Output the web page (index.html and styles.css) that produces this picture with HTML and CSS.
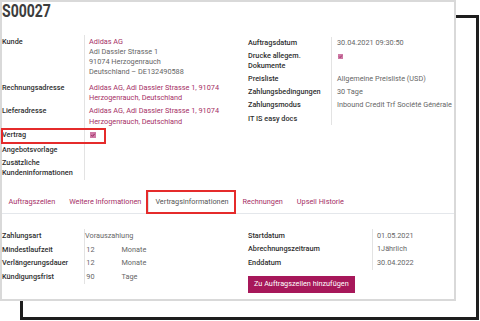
FILE: index.html
```html
<!DOCTYPE html>
<html lang="de">

<head>
    <meta charset="UTF-8">
    <meta name="viewport" content="width=device-width, initial-scale=1.0">
    <title>S00027</title>
    <link rel="stylesheet" href="styles.css">
</head>

<body>
    <div class="frame"></div>

    <div class="sheet">
        <h1 class="title"><span>S00027</span></h1>

        <div class="groups">
            <div class="group group-left">
                <div class="field field-kunde">
                    <div class="label">Kunde</div>
                    <div class="value">
                        <a class="link">Adidas AG</a><br>
                        Adi Dassler Strasse 1<br>
                        91074 Herzogenrauch<br>
                        Deutschland – DE132490588
                    </div>
                </div>
                <div class="field">
                    <div class="label">Rechnungsadresse</div>
                    <div class="value"><a class="link">Adidas AG, Adi Dassler Strasse 1, 91074 Herzogenrauch, Deutschland</a></div>
                </div>
                <div class="field">
                    <div class="label">Lieferadresse</div>
                    <div class="value"><a class="link">Adidas AG, Adi Dassler Strasse 1, 91074 Herzogenrauch, Deutschland</a></div>
                </div>
                <div class="field field-vertrag">
                    <div class="label">Vertrag</div>
                    <div class="value">
                        <svg class="check" width="6" height="6" viewBox="0 0 6 6"><rect width="6" height="6" fill="#cf7aa6"/><path d="M1.3 3.1 L2.5 4.3 L4.7 1.8" stroke="#8c1d52" stroke-width="0.9" fill="none"/></svg>
                    </div>
                </div>
                <div class="field field-tight">
                    <div class="label">Angebotsvorlage</div>
                    <div class="value"></div>
                </div>
                <div class="field field-last">
                    <div class="label">Zusätzliche Kundeninformationen</div>
                    <div class="value"></div>
                </div>
            </div>

            <div class="group group-right">
                <div class="field">
                    <div class="label">Auftragsdatum</div>
                    <div class="value">30.04.2021 09:30:50</div>
                </div>
                <div class="field">
                    <div class="label">Drucke allegem. Dokumente</div>
                    <div class="value">
                        <svg class="check" width="5" height="5" viewBox="0 0 6 6"><rect width="6" height="6" fill="#cf7aa6"/><path d="M1.3 3.1 L2.5 4.3 L4.7 1.8" stroke="#8c1d52" stroke-width="0.9" fill="none"/></svg>
                    </div>
                </div>
                <div class="field">
                    <div class="label">Preisliste</div>
                    <div class="value">Allgemeine Preisliste (USD)</div>
                </div>
                <div class="field">
                    <div class="label">Zahlungsbedingungen</div>
                    <div class="value">30 Tage</div>
                </div>
                <div class="field">
                    <div class="label">Zahlungsmodus</div>
                    <div class="value">Inbound Credit Trf Société Générale</div>
                </div>
                <div class="field">
                    <div class="label">IT IS easy docs</div>
                    <div class="value"></div>
                </div>
            </div>
        </div>

        <div class="tabs">
            <a class="tab">Auftragszeilen</a>
            <a class="tab">Weitere Informationen</a>
            <a class="tab active">Vertragsinformationen</a>
            <a class="tab">Rechnungen</a>
            <a class="tab">Upsell Historie</a>
        </div>

        <div class="tab-pane">
            <div class="pane-left">
                <div class="field">
                    <div class="label">Zahlungsart</div>
                    <div class="value">Vorauszahlung</div>
                </div>
                <div class="field">
                    <div class="label">Mindestlaufzeit</div>
                    <div class="value"><span class="num">12</span>Monate</div>
                </div>
                <div class="field">
                    <div class="label">Verlängerungsdauer</div>
                    <div class="value"><span class="num">12</span>Monate</div>
                </div>
                <div class="field">
                    <div class="label">Kündigungsfrist</div>
                    <div class="value"><span class="num">90</span>Tage</div>
                </div>
            </div>

            <div class="pane-right">
                <div class="field">
                    <div class="label">Startdatum</div>
                    <div class="value">01.05.2021</div>
                </div>
                <div class="field">
                    <div class="label">Abrechnungszeitraum</div>
                    <div class="value">1Jährlich</div>
                </div>
                <div class="field">
                    <div class="label">Enddatum</div>
                    <div class="value">30.04.2022</div>
                </div>
                <button type="button" class="btn">Zu Auftragszeilen hinzufügen</button>
            </div>
        </div>
    </div>
</body>

</html>
```

FILE: styles.css
```css
body {
    margin: 0;
    background-color: #fff;
    font-family: Roboto, "Noto Sans", sans-serif;
    font-size: 7.3px;
    line-height: 10.3px;
    color: #666;
}

/* black outline behind the sheet */
.frame {
    position: absolute;
    left: 20px;
    top: 15px;
    width: 459px;
    height: 305px;
    box-sizing: border-box;
    border: 3px solid #1e1e1e;
}

.sheet {
    position: relative;
    width: 456px;
    height: 301px;
    box-sizing: border-box;
    border: 2px solid #d9d9d9;
    background-color: #fff;
}

.title {
    margin: -1px 0 0;
    font-size: 18px;
    line-height: 20px;
    font-weight: 700;
    color: #3d3d3d;
}

.title span {
    display: inline-block;
    transform: scaleX(0.78);
    transform-origin: left;
}

.link {
    color: #a52f66;
    text-decoration: none;
}

.label {
    font-weight: 500;
    color: #2f2f2f;
}

.field {
    display: grid;
    grid-template-columns: 82px 1fr;
}

.label,
.value {
    padding: 1.6px 0;
}

.value {
    border-left: 1px solid #e3e3e3;
    padding-left: 4px;
}

.check {
    display: inline-block;
    margin-left: 1px;
    vertical-align: -1px;
}

/* upper groups */
.groups {
    display: flex;
    margin-top: 14px;
}

.group-left {
    width: 246px;
}

.field-kunde .label,
.field-kunde .value {
    padding-bottom: 3.2px;
}

.field-vertrag {
    position: relative;
}

.field-vertrag::after {
    content: "";
    position: absolute;
    left: -1px;
    top: -1px;
    width: 105px;
    height: 16px;
    box-sizing: border-box;
    border: 2px solid #e52b2b;
}

.field-tight .label,
.field-tight .value {
    padding: 2.6px 0 0.6px;
}

.field-last .label,
.field-last .value {
    padding-top: 2.2px;
}

.group-right {
    flex: 1;
    margin-top: 1.8px;
}

.group-right .field {
    grid-template-columns: 83px 1fr;
}

.group-right .label,
.group-right .value {
    padding: 1.3px 0;
}

.group-right .field:last-child .label {
    padding-top: 2.3px;
}

.group-right .value {
    padding-left: 5px;
    white-space: nowrap;
}

/* tabs */
.tabs {
    display: flex;
    margin-top: 11.5px;
    margin-left: -0.5px;
    border-bottom: 1px solid #e4e7eb;
}

.tab {
    padding: 5px 6px;
    border: 1px solid transparent;
    margin-bottom: -1px;
    color: #a52f66;
}

.tab.active {
    position: relative;
    color: #555;
    border-color: #dee2e6 #dee2e6 #fff;
    background-color: #fff;
}

.tab.active::after {
    content: "";
    position: absolute;
    left: -3px;
    right: -1px;
    top: -2px;
    bottom: -1px;
    border: 2px solid #e52b2b;
}

.tab-pane {
    display: flex;
    padding-top: 15.5px;
}

.pane-left {
    width: 246px;
}

.pane-left .label,
.pane-left .value {
    padding: 1.7px 0;
}

.num {
    display: inline-block;
    width: 9.5px;
    margin-right: 27px;
    text-align: right;
}

.pane-right {
    flex: 1;
}

.pane-right .field {
    grid-template-columns: 124px 1fr;
}

.btn {
    margin-top: 6.5px;
    padding: 3.35px 6px;
    border: none;
    background-color: #a7185a;
    color: #fff;
    font: inherit;
    line-height: 10.3px;
    cursor: pointer;
}
```
